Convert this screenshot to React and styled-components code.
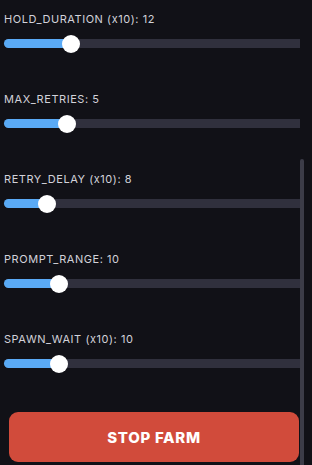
import React from 'react'
import styled, { createGlobalStyle } from 'styled-components'

const GlobalStyle = createGlobalStyle`
html, body {
    margin: 0;
    padding: 0;
    background: #111117;
}
body {
    font-family: Inter, "Noto Sans", sans-serif;
}
`

const settings = [
    { label: 'HOLD_DURATION (x10)', value: 12, pct: 0.209 },
    { label: 'MAX_RETRIES', value: 5, pct: 0.194 },
    { label: 'RETRY_DELAY (x10)', value: 8, pct: 0.122 },
    { label: 'PROMPT_RANGE', value: 10, pct: 0.165 },
    { label: 'SPAWN_WAIT (x10)', value: 10, pct: 0.165 },
]

const TRACK_W = 296
const THUMB = 18

const Slider = ({ pct }) => {
    const center = THUMB / 2 + (TRACK_W - THUMB) * pct
    return (
        <Track>
            <Fill style={{ width: center }} />
            <Thumb style={{ left: center - THUMB / 2 }} />
        </Track>
    )
}

const App = () => {
    return (
        <>
            <GlobalStyle />
            <Panel>
                <List>
                    {settings.map((s) => (
                        <Setting key={s.label}>
                            <Label>{s.label}: {s.value}</Label>
                            <Slider pct={s.pct} />
                        </Setting>
                    ))}
                </List>
                <StopButton>STOP FARM</StopButton>
                <ScrollThumb />
            </Panel>
        </>
    )
}

export default App

const Panel = styled.div`
position: relative;
width: 312px;
height: 465px;
overflow: hidden;
background: #111117;
`

const List = styled.div`
display: flex;
flex-direction: column;
padding-left: 4px;
`

const Setting = styled.div`
height: 80px;
padding-top: 12px;
box-sizing: border-box;
display: flex;
flex-direction: column;
gap: 13px;
`

const Label = styled.div`
font-size: 11px;
line-height: 14px;
color: #d2d2da;
letter-spacing: 0.55px;
white-space: nowrap;
`

const Track = styled.div`
position: relative;
width: ${TRACK_W}px;
height: 9px;
background: #30303d;
border-radius: 5px 0 0 5px;
`

const Fill = styled.div`
height: 100%;
background: #5aaaf6;
border-radius: 5px 0 0 5px;
`

const Thumb = styled.div`
position: absolute;
top: -4.5px;
width: ${THUMB}px;
height: ${THUMB}px;
border-radius: 50%;
background: #ffffff;
`

const StopButton = styled.button`
display: flex;
justify-content: center;
align-items: center;
margin: 12px 0 0 9px;
width: 290px;
height: 50px;
border: none;
border-radius: 9px;
background: #d14b3b;
color: #ffffff;
font-family: Inter, "Noto Sans", sans-serif;
font-weight: 800;
font-size: 15px;
letter-spacing: 0.7px;
cursor: pointer;
`

const ScrollThumb = styled.div`
position: absolute;
left: 300px;
top: 159px;
width: 4px;
height: 320px;
border-radius: 2px;
background: #3c3c48;
`
